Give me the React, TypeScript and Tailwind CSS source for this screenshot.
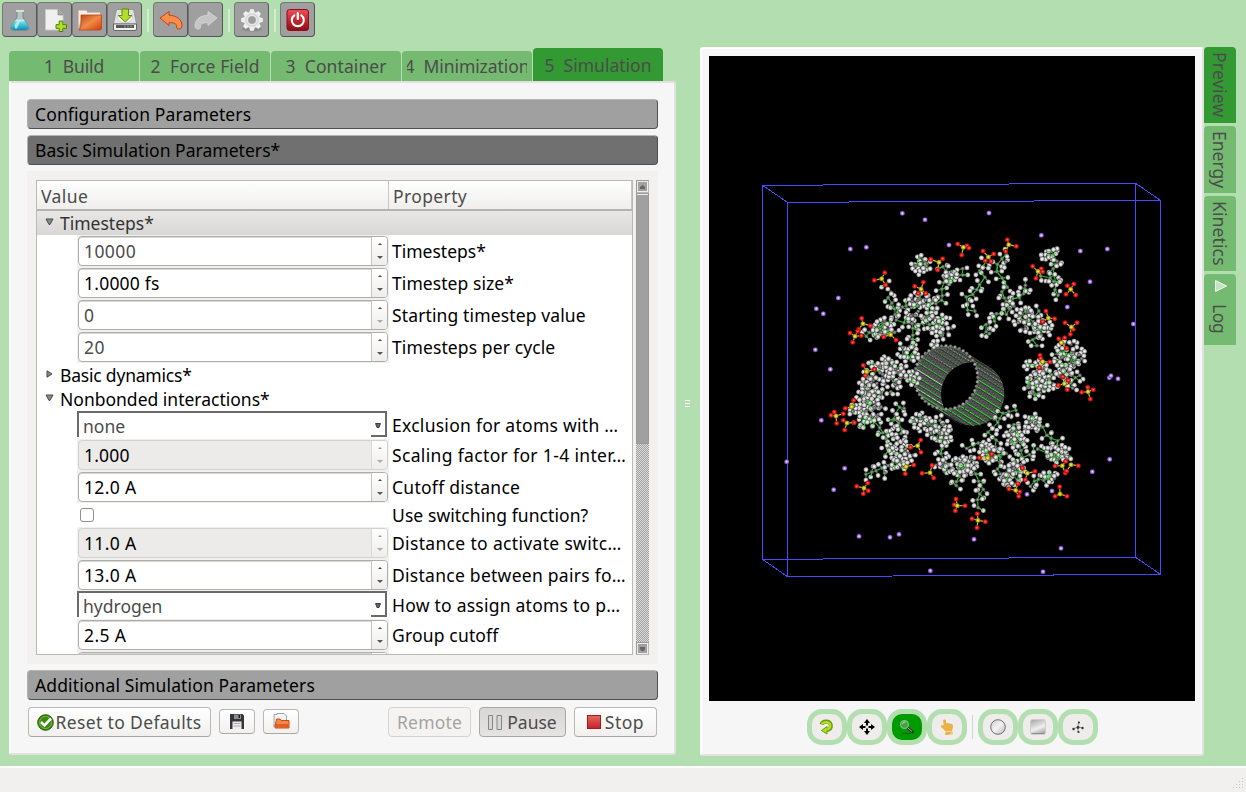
import { useLayoutEffect, useRef, useState } from "react";
import type { ReactNode } from "react";
import { FaHandPointUp } from "react-icons/fa";

/* ---------- text fitted to a fixed advance width ---------- */
function Fit({ text, w, className = "" }: { text: string; w: number; className?: string }) {
  const ref = useRef<HTMLSpanElement>(null);
  const [spacing, setSpacing] = useState(0);
  useLayoutEffect(() => {
    if (ref.current) {
      const natural = ref.current.offsetWidth;
      setSpacing((w - natural) / text.length);
    }
  }, [text, w]);
  return (
    <span ref={ref} className={`inline-block whitespace-pre ${className}`} style={{ letterSpacing: spacing }}>
      {text}
    </span>
  );
}

/* ---------- toolbar ---------- */
function ToolButton({ children }: { children: ReactNode }) {
  return (
    <div className="flex h-[35px] w-[35px] items-center justify-center rounded-[4px] border border-t-[#777] border-l-[#777] border-r-[#555] border-b-[#555] bg-[#9f9f9f]">
      {children}
    </div>
  );
}

const Sep = () => <div className="mx-[4px] mt-[7px] h-[23px] w-[2px] bg-[#d3ecd1]" />;

function Flask() {
  return (
    <svg width="24" height="24" viewBox="0 0 24 24">
      <defs>
        <linearGradient id="fl" x1="0" x2="0" y1="0" y2="1">
          <stop offset="0" stopColor="#7fe9f2" />
          <stop offset="1" stopColor="#088fb0" />
        </linearGradient>
      </defs>
      <path d="M9 2.500v7L3 18.500c-1.300 3 .5 4 3 4h11.500c2.500 0 4.300-1 3-4l-5.500-9v-7z" fill="#b7c3c5" stroke="#6f8185" strokeWidth=".8" />
      <path d="M7 12.500h9.500l4 6.500c.6 2-.5 3-2.500 3H6c-2.500 0-3.600-1-2.800-3z" fill="url(#fl)" />
      <path d="M6.500 17.500l3-4.500h2.500l-3 7.500h-2z" fill="#c9f8fb" opacity=".75" />
      <path d="M8 2h8v1.800H8z" fill="#dce2e3" />
      <ellipse cx="12" cy="12.600" rx="4.600" ry="1" fill="#b8f3f6" />
    </svg>
  );
}
function NewDoc() {
  return (
    <svg width="24" height="24" viewBox="0 0 24 24">
      <path d="M2.500 1.500h13l4.500 5V22h-17.500z" fill="#f0f0ee" stroke="#c9c9c7" />
      <path d="M15 1.500v5.500H20z" fill="#a9a9a7" stroke="#7d7d7b" strokeWidth=".6" />
      <path d="M16.200 13h3.600v3.700h3.700v3.600h-3.700v3.200h-3.600v-3.200h-3.200v-3.600h3.200z" fill="#b4dd2c" stroke="#4c8204" strokeWidth="1" />
    </svg>
  );
}
function Folder() {
  return (
    <svg width="26" height="24" viewBox="0 0 26 24">
      <defs>
        <linearGradient id="fo" x1="0" x2="1" y1="0" y2="1">
          <stop offset="0" stopColor="#b9420f" />
          <stop offset=".5" stopColor="#f08b4a" />
          <stop offset="1" stopColor="#cf3d05" />
        </linearGradient>
      </defs>
      <path d="M1.500 20V2.500h8l1 2h12.500V10H5z" fill="#f2efec" stroke="#e2b9a5" strokeWidth=".8" />
      <path d="M4 7h20.500V20q0 2-2 2H2L4 19z" fill="url(#fo)" stroke="#c43f0a" strokeWidth=".8" />
    </svg>
  );
}
function SaveDisk() {
  return (
    <svg width="26" height="26" viewBox="0 0 26 26">
      <path d="M4.500 2.500h17L24.500 17H1.500z" fill="#e3e3e1" stroke="#8b8b89" strokeWidth=".8" />
      <ellipse cx="13" cy="10" rx="7.500" ry="6" fill="#f8f8f8" stroke="#b9b9b7" strokeWidth=".6" />
      <path d="M1.500 17h23v5q0 1.500-1.500 1.500H3q-1.500 0-1.500-1.500z" fill="#f0f0f0" stroke="#4b4b4b" strokeWidth=".8" />
      <path d="M4 18h18V21H4z" fill="#585858" />
      <path d="M13 18.500v2M16 18.500v2M19 18.500v2" stroke="#bbb" strokeWidth=".8" />
      <path d="M10 2h6.500v6.500H20L13.200 15 6.300 8.500H10z" fill="#b5de2a" stroke="#5a8b07" />
    </svg>
  );
}
function Arrow({ redo = false }: { redo?: boolean }) {
  return (
    <svg width="24" height="24" viewBox="0 0 24 24" className={redo ? "-scale-x-100" : ""}>
      <path
        d="M1 10L10 3.500v3.700c7 .3 12.500 3.500 13 10 0 2.500-1 3.800-3 3.800-2.500 0-2.500-1-2.500-3 0-2.500-3.500-3.500-7.500-3.300V17.500z"
        fill={redo ? "#c6c6c6" : "#f58d4e"}
        stroke={redo ? "#d2d2d2" : "#c9420d"}
        strokeLinejoin="round"
      />
    </svg>
  );
}
function Gear() {
  const teeth = [0, 45, 90, 135, 180, 225, 270, 315];
  return (
    <svg width="24" height="24" viewBox="0 0 24 24">
      <ellipse cx="12" cy="21" rx="10" ry="2.500" fill="#8a8a8a" />
      {teeth.map((a) => (
        <path key={a} d="M9.300 5l.8-3.800h3.800l.8 3.800z" fill="#f0f0f0" transform={`rotate(${a} 12 12)`} />
      ))}
      <circle cx="12" cy="12" r="6" fill="none" stroke="#ececec" strokeWidth="4.500" />
      <circle cx="12" cy="12" r="6" fill="none" stroke="#d5d5d5" strokeWidth="1.500" />
      <circle cx="12" cy="12" r="3.800" fill="#9c9c9c" stroke="#bababa" strokeWidth=".6" />
    </svg>
  );
}
function Power() {
  return (
    <svg width="24" height="24" viewBox="0 0 24 24">
      <defs>
        <linearGradient id="pw" x1="0" x2="0" y1="0" y2="1">
          <stop offset="0" stopColor="#e8525a" />
          <stop offset=".5" stopColor="#c8272f" />
          <stop offset="1" stopColor="#8e0b18" />
        </linearGradient>
      </defs>
      <rect x="1" y="1.500" width="21.500" height="21" rx="2.500" fill="url(#pw)" stroke="#8c0e1a" />
      <path d="M8.300 7.300a6 6 0 1 0 7 0" fill="none" stroke="#fff" strokeWidth="2.100" strokeLinecap="round" />
      <path d="M11.800 5v6" stroke="#fff" strokeWidth="2.200" strokeLinecap="round" />
    </svg>
  );
}

/* ---------- tabs and section bars ---------- */
function Tab({ text, w }: { text: string; w: number }) {
  return (
    <div className="flex h-[30px] w-[130px] items-center justify-center overflow-hidden rounded-t-[4px] bg-[#74ba70]">
      <Fit text={text} w={w} />
    </div>
  );
}
function Section({ text, w, dark = false }: { text: string; w: number; dark?: boolean }) {
  return (
    <div
      className={`flex h-[30px] w-[631px] items-center rounded-[4px] border border-t-[#b5b5b5] border-l-[#b0b0b0] border-r-[#4f4f4f] border-b-[#4f4f4f] pl-[7px] text-black ${
        dark ? "bg-[#707070]" : "bg-[#a0a0a0]"
      }`}
    >
      <Fit text={text} w={w} />
    </div>
  );
}

/* ---------- property tree ---------- */
type Row = {
  kind: "spin" | "combo" | "check";
  value?: string;
  vw?: number;
  tone?: "typed" | "faint" | "off";
  noDown?: boolean;
  prop: string;
  pw: number;
};

const timestepRows: Row[] = [
  { kind: "spin", value: "10000", vw: 52, tone: "faint", prop: "Timesteps*", pw: 94 },
  { kind: "spin", value: "1.0000 fs", vw: 76, tone: "typed", prop: "Timestep size*", pw: 122 },
  { kind: "spin", value: "0", vw: 10, tone: "faint", noDown: true, prop: "Starting timestep value", pw: 194 },
  { kind: "spin", value: "20", vw: 21, tone: "faint", prop: "Timesteps per cycle", pw: 163 },
];
const nonbondedRows: Row[] = [
  { kind: "combo", value: "none", vw: 42, prop: "Exclusion for atoms with …", pw: 226 },
  { kind: "spin", value: "1.000", vw: 46, tone: "off", prop: "Scaling factor for 1-4 inter…", pw: 234 },
  { kind: "spin", value: "12.0 A", vw: 52, tone: "typed", prop: "Cutoff distance", pw: 128 },
  { kind: "check", prop: "Use switching function?", pw: 196 },
  { kind: "spin", value: "11.0 A", vw: 52, tone: "off", prop: "Distance to activate switc…", pw: 230 },
  { kind: "spin", value: "13.0 A", vw: 52, tone: "typed", prop: "Distance between pairs fo…", pw: 234 },
  { kind: "combo", value: "hydrogen", vw: 79, prop: "How to assign atoms to p…", pw: 228 },
  { kind: "spin", value: "2.5 A", vw: 42, tone: "typed", prop: "Group cutoff", pw: 107 },
];

function Spin({ row }: { row: Row }) {
  const off = row.tone === "off";
  return (
    <div className="flex h-[32px] w-[312px] items-center bg-[#f1f0ee] pl-px">
      <div
        className={`flex h-[30px] w-[310px] overflow-hidden rounded-[4px] border ${off ? "border-[#d3d1cf] bg-[#ecebe9]" : "border-[#b0aeab] bg-white shadow-[inset_0_1px_0_#d9d8d6]"}`}
      >
        <div className={`flex flex-1 items-center pl-[5px] ${row.tone === "faint" ? "text-[#4c4c4c]" : "text-black"}`}>
          {row.value && <Fit text={row.value} w={row.vw ?? 0} />}
        </div>
        <div className={`flex w-[16px] flex-col items-center justify-between border-l bg-gradient-to-b from-white to-[#eeedeb] py-[6px] ${off ? "border-[#dcdad8]" : "border-[#c6c4c1]"}`}>
          <svg width="4" height="2" viewBox="0 0 4 2"><path d="M0 2L2 0l2 2z" fill={off ? "#999" : "#444"} /></svg>
          <svg width="6" height="3" viewBox="0 0 6 3"><path d="M0 0h6L3 3z" fill={off || row.noDown ? "#aaa" : "#555"} /></svg>
        </div>
      </div>
    </div>
  );
}

function Combo({ row }: { row: Row }) {
  return (
    <div className="h-[28px] w-[312px]">
      <div className="flex h-[26px] w-[310px] items-center border-t-2 border-l-2 border-t-[#6a6a6a] border-l-[#6a6a6a] bg-white pl-[4px] text-[#4c4c4c]">
        <Fit text={row.value ?? ""} w={row.vw ?? 0} className="mt-px flex-none" />
        <div className="ml-auto flex h-[24px] w-[16px] items-center justify-center border-r-2 border-b-2 border-[#6a6a6a] pt-[3px]">
          <svg width="6" height="5" viewBox="0 0 6 5"><path d="M.5.5h5L4 4.500H2z" fill="#666" stroke="#333" strokeWidth=".9" /></svg>
        </div>
      </div>
    </div>
  );
}

function PropRow({ row }: { row: Row }) {
  return (
    <div className="flex items-center">
      <div className="w-[40px] flex-none" />
      {row.kind === "spin" && <Spin row={row} />}
      {row.kind === "combo" && <Combo row={row} />}
      {row.kind === "check" && (
        <div className="flex h-[24px] w-[312px] items-center pl-[3px]">
          <div className="h-[14px] w-[14px] rounded-[3px] border border-[#8f8d8b] bg-white" />
        </div>
      )}
      <Fit text={row.prop} w={row.pw} className="ml-[3px] flex-none text-black" />
    </div>
  );
}

function Branch({ text, w, open = false, shaded = false }: { text: string; w: number; open?: boolean; shaded?: boolean }) {
  return (
    <div className={`flex h-[24px] flex-none items-center pl-[8px] ${shaded ? "bg-gradient-to-b from-[#e8e7e5] to-[#d8d7d5] text-[#333]" : "text-black"}`}>
      <svg width="9" height="8" viewBox="0 0 9 8" className="mr-[6px] mb-[3px]">
        <path d={open ? "M1 1h7L5 6.500H4z" : "M2 .8L7 4 2 7.200z"} fill="#888" stroke="#4a4a4a" />
      </svg>
      <Fit text={text} w={w} />
    </div>
  );
}

function ScrollArrow({ up = false }: { up?: boolean }) {
  return (
    <div className="flex h-[13px] w-[13px] items-center justify-center border-2 border-t-[#999] border-l-[#999] border-r-[#b8b8b8] border-b-[#b8b8b8] bg-[#a0a0a0] outline -outline-offset-2 outline-[#eee]">
      <svg width="5" height="4" viewBox="0 0 5 4"><path d={up ? "M0 4V2l2.500-2L5 2v2z" : "M0 0h5v2L3.500 4h-2L0 2z"} fill="#666" /></svg>
    </div>
  );
}

function PropertyTree() {
  return (
    <div className="flex h-[493px] w-[631px] bg-[#f2f1ef] pt-[9px] pl-[9px]">
      <div className="flex h-[475px] w-[597px] flex-col overflow-hidden border border-[#bbb9b6] bg-white">
        <div className="flex h-[30px] flex-none border-b-2 border-[#b5b3b1] bg-gradient-to-b from-white to-[#efeeec] text-[#4c4c4c]">
          <div className="flex w-[352px] items-center border-r border-[#c9c7c5] pl-[4px] pt-[2px]"><Fit text="Value" w={47} /></div>
          <div className="flex flex-1 items-center border-r border-[#c9c7c5] pl-[4px] pt-[2px]"><Fit text="Property" w={74} /></div>
        </div>
        <Branch text="Timesteps*" w={94} open shaded />
        {timestepRows.map((r) => <PropRow key={r.prop} row={r} />)}
        <Branch text="Basic dynamics*" w={132} />
        <Branch text="Nonbonded interactions*" w={210} open />
        {nonbondedRows.map((r) => <PropRow key={r.prop} row={r} />)}
        <PropRow row={{ kind: "spin", tone: "typed", prop: " ", pw: 5 }} />
      </div>
      <div className="ml-[3px] flex h-[475px] w-[13px] flex-col bg-[#b9b9b9] bg-[repeating-conic-gradient(#a0a0a0_0_25%,#dcdcdc_0_50%)] bg-[length:2px_2px]">
        <ScrollArrow up />
        <div className="h-[251px] border border-t-2 border-t-[#eee] border-l-[#ddd] border-r-[#777] border-b-[#777] bg-[#a0a0a0] outline -outline-offset-1 outline-[#999]" />
        <div className="flex-1" />
        <ScrollArrow />
      </div>
    </div>
  );
}

/* ---------- bottom buttons ---------- */
function PushButton({ children, className = "" }: { children: ReactNode; className?: string }) {
  return (
    <div className={`flex items-center justify-center rounded-[4px] border ${className}`}>
      {children}
    </div>
  );
}
const plain = "border-[#bab8b5] border-b-[#a9a7a4] bg-gradient-to-b from-white to-[#f1f0ee] text-[#4c4c4c]";

/* ---------- molecular scene (three units per pixel) ---------- */
type P = [number, number];

const ions: P[] = [
  [457, 130], [525, 149], [717, 129], [301, 237], [349, 232], [597, 225], [265, 384], [199, 416], [220, 431], [196, 539], [241, 598],
  [874, 196], [991, 243], [1072, 237], [1020, 335], [952, 411], [1150, 462], [1078, 623], [1083, 617], [1104, 626],
  [214, 751], [110, 875], [284, 895], [251, 959], [1079, 868], [1027, 905], [906, 963], [831, 973], [327, 1099], [420, 1102],
  [447, 1093], [672, 1108], [933, 1135], [541, 1202], [879, 1205],
];

/* first point is the central atom, the rest are the oxygens bonded to it */
const headGroups: P[][] = [
  [[395, 326], [373, 331], [404, 308], [407, 345]],
  [[513, 357], [494, 349], [520, 337], [527, 370], [505, 370]],
  [[339, 461], [335, 445], [361, 467], [326, 478]],
  [[315, 499], [300, 489], [308, 517], [334, 497], [323, 484]],
  [[422, 494], [401, 501], [438, 510]],
  [[567, 277], [542, 268], [578, 266], [563, 300]],
  [[640, 232], [623, 222], [651, 227], [657, 234], [635, 255]],
  [[715, 261], [699, 243], [731, 252], [706, 272], [723, 274]],
  [[350, 605], [340, 586], [373, 598], [346, 616]],
  [[776, 224], [772, 209], [799, 229], [767, 244]],
  [[864, 304], [848, 289], [874, 296], [878, 305], [858, 325]],
  [[962, 358], [952, 347], [971, 342], [977, 375], [948, 373]],
  [[895, 444], [888, 423], [914, 446], [878, 455]],
  [[964, 471], [945, 458], [981, 458], [961, 493], [970, 478]],
  [[934, 518], [926, 506], [944, 503], [950, 535]],
  [[878, 575], [900, 576], [868, 593], [870, 556], [872, 565]],
  [[943, 641], [925, 646], [938, 620], [952, 659], [955, 631]],
  [[1014, 665], [995, 667], [1013, 652], [1030, 659], [1021, 687]],
  [[258, 738], [243, 736], [253, 726], [280, 731], [260, 760]],
  [[291, 759], [280, 751], [313, 758], [284, 780]],
  [[305, 710], [311, 691], [286, 715]],
  [[503, 827], [512, 810], [481, 832], [513, 847]],
  [[342, 954], [320, 949], [353, 939], [355, 962], [340, 971]],
  [[468, 890], [491, 885], [466, 911]],
  [[540, 908], [546, 886], [516, 910], [551, 924]],
  [[622, 1007], [618, 987], [613, 1004], [645, 1007], [616, 1022]],
  [[684, 1051], [682, 1031], [666, 1046], [706, 1055], [681, 1073]],
  [[713, 864], [725, 852], [688, 863]],
  [[832, 910], [817, 894], [855, 904], [826, 929]],
  [[797, 961], [777, 957], [804, 941], [809, 965], [806, 979]],
  [[937, 887], [915, 888], [947, 874], [946, 909]],
  [[963, 884], [985, 887], [950, 903]],
  [[930, 972], [929, 950], [915, 979], [951, 979]],
];

const chains: P[][] = [
  [[407, 345], [420, 370], [412, 385], [437, 415], [440, 450]],
  [[440, 425], [470, 405], [510, 385], [545, 400]],
  [[500, 460], [560, 465], [600, 480]],
  [[575, 290], [598, 320], [640, 315], [629, 275]],
  [[598, 325], [572, 358], [575, 392], [540, 410]],
  [[706, 275], [688, 302], [702, 325], [682, 355], [652, 385], [655, 422], [692, 425]],
  [[345, 497], [375, 485], [400, 465], [445, 492]],
  [[440, 450], [485, 462], [487, 492], [475, 545]],
  [[765, 255], [742, 280], [738, 308], [755, 328], [772, 350], [755, 368], [770, 395], [800, 408]],
  [[790, 405], [770, 432], [738, 428], [735, 455], [705, 465], [705, 485], [735, 492]],
  [[765, 275], [780, 278]],
  [[790, 385], [822, 375], [828, 345], [852, 340]],
  [[905, 245], [918, 270], [912, 298], [915, 360], [935, 390]],
  [[875, 320], [900, 322], [918, 350]],
  [[865, 425], [850, 450]],
  [[880, 480], [850, 510], [870, 545]],
  [[850, 670], [850, 698]],
  [[990, 615], [965, 635], [970, 668]],
  [[340, 755], [370, 755], [400, 785], [425, 805]],
  [[430, 750], [445, 715], [475, 708]],
  [[430, 750], [455, 775], [455, 805]],
  [[345, 915], [380, 900], [412, 888], [440, 870]],
  [[400, 912], [415, 905]],
  [[575, 800], [575, 850], [582, 890]],
  [[640, 890], [622, 935], [610, 965]],
  [[665, 895], [685, 930], [700, 955], [685, 985], [682, 1012], [668, 1018]],
  [[650, 835], [682, 820], [710, 850], [750, 860], [790, 840]],
  [[795, 718], [760, 730], [740, 760], [715, 785], [740, 810], [730, 845]],
  [[790, 765], [800, 815], [820, 860], [865, 835]],
  [[845, 755], [880, 770], [890, 795], [925, 815], [920, 845]],
  [[865, 835], [890, 845], [920, 855], [955, 850]],
  [[750, 860], [745, 900], [765, 930], [790, 940]],
  [[840, 950], [850, 930], [880, 930], [900, 912], [930, 930]],
];

/* x, y, radius, atom count */
const clumps: [number, number, number, number][] = [
  [513, 285, 27, 18], [598, 320, 22, 9], [512, 415, 48, 36], [572, 468, 38, 25], [400, 472, 30, 17], [475, 545, 32, 16], [555, 520, 14, 5],
  [402, 625, 60, 60], [440, 585, 32, 14], [485, 625, 24, 12], [890, 255, 17, 6], [912, 255, 20, 7], [830, 452, 36, 24], [880, 478, 28, 15],
  [855, 600, 34, 20], [862, 645, 38, 28], [955, 555, 48, 36], [945, 595, 42, 20], [908, 620, 34, 16], [350, 690, 40, 24], [368, 715, 36, 22],
  [312, 715, 20, 8], [335, 760, 22, 8], [350, 650, 24, 12], [435, 812, 36, 20], [460, 850, 34, 20], [448, 880, 24, 9], [412, 840, 20, 7],
  [510, 757, 27, 17], [560, 775, 38, 26], [580, 802, 28, 14], [582, 890, 26, 13], [632, 890, 30, 20], [665, 882, 22, 10],
  [710, 850, 28, 18], [800, 800, 34, 24], [845, 755, 24, 15], [800, 890, 28, 13], [780, 930, 26, 11], [920, 853, 30, 17], [950, 850, 20, 8],
  [790, 910, 28, 10], [895, 920, 18, 7], [755, 925, 16, 4],
];

function makeRandom(seed: number) {
  let s = seed;
  return () => {
    s = (s * 1664525 + 1013904223) % 4294967296;
    return s / 4294967296;
  };
}

type Atom = { p: P; h: boolean };

function buildLipids() {
  const rnd = makeRandom(11);
  const bonds: [P, P][] = [];
  const atoms: Atom[] = [];
  chains.forEach((c) => {
    let prev: P | null = null;
    for (let i = 0; i < c.length - 1; i++) {
      const [x0, y0] = c[i];
      const [x1, y1] = c[i + 1];
      const len = Math.hypot(x1 - x0, y1 - y0);
      const n = Math.max(1, Math.round(len / 19));
      for (let k = 0; k < n; k++) {
        const p: P = [x0 + ((x1 - x0) * k) / n + (rnd() - 0.5) * 8, y0 + ((y1 - y0) * k) / n + (rnd() - 0.5) * 8];
        atoms.push({ p, h: false });
        if (prev) bonds.push([prev, p]);
        const a = Math.atan2(y1 - y0, x1 - x0) + Math.PI / 2 + (rnd() - 0.5) * 1.4;
        [1, -1].forEach((d) => {
          const reach = 13 + rnd() * 5;
          const h: P = [p[0] + Math.cos(a) * reach * d, p[1] + Math.sin(a) * reach * d];
          atoms.push({ p: h, h: true });
          bonds.push([p, h]);
        });
        prev = p;
      }
    }
  });
  clumps.forEach(([cx, cy, r, count]) => {
    const own: P[] = [];
    let tries = 0;
    while (own.length < count && tries++ < 700) {
      const a = rnd() * Math.PI * 2;
      const d = Math.pow(rnd(), 0.6) * r * 1.1;
      const p: P = [cx + Math.cos(a) * d, cy + Math.sin(a) * d];
      if (own.every((q) => Math.hypot(q[0] - p[0], q[1] - p[1]) > 9)) own.push(p);
    }
    let last: P | null = null;
    own.forEach((p, i) => {
      if (i % 5 < 3) {
        const c: P = [p[0] * 0.75 + cx * 0.25 + (rnd() - 0.5) * 12, p[1] * 0.75 + cy * 0.25 + (rnd() - 0.5) * 12];
        atoms.push({ p: c, h: false });
        bonds.push([p, c]);
        if (last && Math.hypot(last[0] - c[0], last[1] - c[1]) < 36) bonds.push([last, c]);
        last = c;
      }
      atoms.push({ p, h: true });
    });
  });
  return { bonds, atoms };
}
const lipids = buildLipids();

const near: P = [588, 622];
const far: P = [668, 672];
const tubeR = 95;
const onRing = (c: P, deg: number): P => [c[0] + tubeR * Math.cos((deg * Math.PI) / 180), c[1] + tubeR * Math.sin((deg * Math.PI) / 180)];

function Tube() {
  const angles = Array.from({ length: 30 }, (_, i) => i * 12 + 4);
  const ring = Array.from({ length: 44 }, (_, i) => onRing(near, (i * 360) / 44));
  return (
    <g>
      <defs>
        <pattern id="mesh" width="9" height="6" patternUnits="userSpaceOnUse" patternTransform="rotate(32)">
          <rect width="9" height="6" fill="#343434" />
          <circle cx="2.500" cy="2" r="2.300" fill="#747474" />
          <circle cx="7" cy="5" r="2" fill="#666" />
        </pattern>
        <clipPath id="nearEnd"><circle cx={near[0]} cy={near[1]} r={tubeR} /></clipPath>
      </defs>
      <line x1={near[0]} y1={near[1]} x2={far[0]} y2={far[1]} stroke="url(#mesh)" strokeWidth={tubeR * 2} />
      <circle cx={near[0]} cy={near[1]} r={tubeR} fill="url(#mesh)" />
      <circle cx={far[0]} cy={far[1]} r={tubeR} fill="url(#mesh)" />
      {angles.map((deg, i) => {
        const a = onRing(near, deg);
        const b = onRing(far, deg);
        const inner = deg > 130 && deg < 290;
        const bright = deg > -1 && deg < 95;
        return (
          <g key={deg}>
            <line x1={a[0] + 5} y1={a[1] + 7} x2={b[0] + 5} y2={b[1] + 7} stroke="#262626" strokeWidth="2" />
            {(inner || bright || deg > 325) && (
              <line
                x1={a[0]}
                y1={a[1]}
                x2={b[0]}
                y2={b[1]}
                stroke={bright ? "#20e820" : i % 3 === 1 ? "#9df59d" : "#35c835"}
                strokeWidth="3"
                strokeDasharray={deg > 225 ? "5 5" : i % 2 ? "15 3" : undefined}
                opacity={deg > 225 ? 0.6 : 1}
              />
            )}
          </g>
        );
      })}
      <circle cx={far[0]} cy={far[1]} r={tubeR} fill="#000" clipPath="url(#nearEnd)" />
      {ring.map(([x, y], i) => <circle key={i} cx={x} cy={y} r="4.600" fill={i % 2 ? "#a8a8a8" : "#828282"} stroke="#444" strokeWidth="1" />)}
    </g>
  );
}

function Scene() {
  return (
    <svg width="486" height="645" viewBox="-123 -342 1458 1935" className="block bg-black">
      <defs>
        <radialGradient id="gH"><stop offset="0" stopColor="#fff" /><stop offset=".4" stopColor="#dcdcdc" /><stop offset=".75" stopColor="#a2a2a2" /><stop offset="1" stopColor="#3c3c3c" /></radialGradient>
        <radialGradient id="gO"><stop offset="0" stopColor="#ff7a70" /><stop offset=".5" stopColor="#f01c1c" /><stop offset="1" stopColor="#8c0808" /></radialGradient>
        <radialGradient id="gS"><stop offset="0" stopColor="#fff27a" /><stop offset=".5" stopColor="#d4c41c" /><stop offset="1" stopColor="#6a6005" /></radialGradient>
        <radialGradient id="gI"><stop offset="0" stopColor="#fff" /><stop offset=".45" stopColor="#b98af0" /><stop offset="1" stopColor="#5f3699" /></radialGradient>
        <radialGradient id="gC"><stop offset="0" stopColor="#aaa" /><stop offset="1" stopColor="#3c3c3c" /></radialGradient>
      </defs>
      <g stroke="#4848ff" strokeWidth="3" fill="none" shapeRendering="crispEdges">
        <path d="M37.500 46L1156.500 40V1162L37.500 1168z" />
        <path d="M112.500 97L1231.500 91V1213L112.500 1220z" />
        <path d="M37.500 46l75 51M1156.500 40l75 51M37.500 1168l75 52M1156.500 1162l75 51" />
      </g>
      <Tube />
      <g stroke="#1fd81f" strokeWidth="3.200">
        {lipids.bonds.map(([a, b], i) => <line key={i} x1={a[0]} y1={a[1]} x2={b[0]} y2={b[1]} />)}
      </g>
      {lipids.atoms.map(({ p, h }, i) => <circle key={i} cx={p[0]} cy={p[1]} r={h ? 7.8 : 6} fill={h ? "url(#gH)" : "url(#gC)"} />)}
      <g stroke="#1fd81f" strokeWidth="2.600">
        {lipids.bonds.filter((_, i) => i % 6 === 0).map(([a, b], i) => <line key={i} x1={a[0]} y1={a[1]} x2={b[0]} y2={b[1]} />)}
      </g>
      {headGroups.map((g, i) => (
        <g key={i}>
          {g.slice(1).map(([x, y], k) => <line key={k} x1={g[0][0]} y1={g[0][1]} x2={x} y2={y} stroke="#c8c81c" strokeWidth="3.500" />)}
          {g.slice(1).map(([x, y], k) => <circle key={k} cx={x} cy={y} r="7.500" fill="url(#gO)" />)}
          <circle cx={g[0][0]} cy={g[0][1]} r="7.500" fill="url(#gS)" />
        </g>
      ))}
      {ions.map(([x, y], i) => <circle key={i} cx={x} cy={y} r="7.500" fill="url(#gI)" />)}
    </svg>
  );
}

/* ---------- right side ---------- */
function RoundTool({ children, active = false }: { children: ReactNode; active?: boolean }) {
  return (
    <div className={`flex h-[36px] w-[40px] items-center justify-center rounded-[15px] border-[5px] border-[#b3dfb0] ${active ? "bg-[#009b00]" : "bg-[#eeedeb]"}`}>
      {children}
    </div>
  );
}

function ViewTools() {
  return (
    <div className="flex pl-[98px] pt-[8px]">
      <RoundTool>
        <svg width="16" height="16" viewBox="0 0 16 16">
          <path d="M2.500 5.500C3.500 2 10.500 1 11.800 6c.5 3-1.500 4.800-4.300 5" fill="none" stroke="#6a9c08" strokeWidth="4" />
          <path d="M8 7.500v7.500L2.500 11.500z" fill="#b5dc28" stroke="#6a9c08" />
          <path d="M3 5.200C4 2.800 10 1.800 11.300 6c.4 2.600-1.300 4.200-4.300 4.700" fill="none" stroke="#b5dc28" strokeWidth="2.200" />
        </svg>
      </RoundTool>
      <RoundTool>
        <svg width="16" height="16" viewBox="0 0 16 16">
          <path d="M8 0l3 4H9v2.500H7V4H5zM8 16l3-4H9V9.500H7V12H5zM0 8l4-3v2h2.500v2H4v2zM16 8l-4-3v2H9.500v2H12v2z" fill="#000" />
        </svg>
      </RoundTool>
      <RoundTool active>
        <svg width="16" height="16" viewBox="0 0 16 16">
          <path d="M9 9l4.500 4" stroke="#333" strokeWidth="3" strokeLinecap="round" />
          <path d="M9 9l4 3.600" stroke="#aaa" strokeWidth="1" />
          <circle cx="5.500" cy="5.500" r="3.900" fill="#3fa53f" stroke="#86b886" strokeWidth="1.300" />
          <path d="M3.500 5a2.500 2.500 0 0 1 3-2" stroke="#b5e0b5" fill="none" />
          <path d="M3 14.500h9" stroke="#067006" strokeWidth="1.500" />
        </svg>
      </RoundTool>
      <RoundTool><FaHandPointUp size={16} color="#edb043" className="-rotate-6" /></RoundTool>
      <div className="mr-[4px] ml-[5px] mt-[6px] h-[24px] w-px bg-[#d4d3d1]" />
      <div className="w-px" />
      <RoundTool>
        <svg width="16" height="16" viewBox="0 0 16 16">
          <defs><linearGradient id="ball" x2="1" y2="1"><stop offset="0" stopColor="#cfcfcf" /><stop offset=".5" stopColor="#f2f2f2" /><stop offset="1" stopColor="#bbb" /></linearGradient></defs>
          <circle cx="8" cy="8" r="7.300" fill="url(#ball)" stroke="#6e6e6e" />
        </svg>
      </RoundTool>
      <RoundTool>
        <svg width="16" height="16" viewBox="0 0 16 16">
          <defs><linearGradient id="cube" x1=".2" x2=".6" y2="1"><stop offset="0" stopColor="#a8a8a8" /><stop offset=".6" stopColor="#efefef" /><stop offset="1" stopColor="#aaa" /></linearGradient></defs>
          <rect x=".5" y=".5" width="15" height="15" rx="2" fill="url(#cube)" stroke="#cfcfcf" />
          <path d="M1.500 14.500h13" stroke="#8d8d8d" />
        </svg>
      </RoundTool>
      <RoundTool>
        <svg width="12" height="14" viewBox="0 0 12 14" fill="#333">
          <path d="M1 9l5-2 5 1M6.500 1.500L6 7v5" stroke="#777" strokeWidth=".8" fill="none" />
          <circle cx="1.500" cy="9" r="1.200" /><circle cx="6" cy="7.500" r="1.400" /><circle cx="10.500" cy="8" r="1.200" /><circle cx="7" cy="2.500" r="1" /><circle cx="6.500" cy="12" r="1.100" />
        </svg>
      </RoundTool>
    </div>
  );
}

function VFit({ text, h }: { text: string; h: number }) {
  const ref = useRef<HTMLSpanElement>(null);
  const [spacing, setSpacing] = useState(0);
  useLayoutEffect(() => {
    if (ref.current) setSpacing((h - ref.current.offsetHeight) / text.length);
  }, [text, h]);
  return <span ref={ref} className="inline-block leading-[22px] whitespace-pre" style={{ letterSpacing: spacing }}>{text}</span>;
}
function SideTab({ text, h, className = "", arrow = false }: { text: string; h: number; className?: string; arrow?: boolean }) {
  return (
    <div className={`flex w-[32px] flex-col items-center justify-center rounded-t-[4px] ${className}`}>
      {arrow && (
        <svg width="12" height="12" viewBox="0 0 12 12" className="mb-[12px] ml-[2px]"><path d="M.5.500v11L11.500 6z" fill="#c5e2c3" stroke="#f2faf1" /></svg>
      )}
      <div className="[writing-mode:vertical-rl]"><VFit text={text} h={h} /></div>
    </div>
  );
}

export default function App() {
  return (
    <div className="flex h-[792px] w-[1246px] flex-col overflow-hidden bg-[#b3dfb0] font-['Noto_Sans','Open_Sans',sans-serif] text-[17.5px] leading-[24px] text-[#4c4c4c]">
      <div className="flex h-[47px] flex-none pt-[2px] pl-[2px]">
        <ToolButton><Flask /></ToolButton>
        <ToolButton><NewDoc /></ToolButton>
        <ToolButton><Folder /></ToolButton>
        <ToolButton><SaveDisk /></ToolButton>
        <div className="w-px" />
        <Sep />
        <ToolButton><Arrow /></ToolButton>
        <ToolButton><Arrow redo /></ToolButton>
        <div className="w-px" />
        <Sep />
        <ToolButton><Gear /></ToolButton>
        <div className="w-px" />
        <Sep />
        <ToolButton><Power /></ToolButton>
      </div>

      <div className="flex h-[719px] flex-none">
        <div className="ml-[9px] flex w-[667px] flex-none flex-col">
          <div className="flex h-[34px] flex-none items-end gap-px">
            <Tab text="1  Build" w={60} />
            <Tab text="2  Force Field" w={109} />
            <Tab text="3  Container" w={101} />
            <div className="flex h-[30px] w-[130px] items-center justify-center rounded-t-[4px] bg-[#74ba70]">
              <div className="flex w-[120px] justify-center overflow-hidden"><Fit text="4  Minimization" w={125} className="flex-none" /></div>
            </div>
            <div className="flex h-[33px] w-[130px] items-center justify-center rounded-t-[4px] bg-[#339933]"><Fit text="5  Simulation" w={107} /></div>
          </div>
          <div className="flex h-[674px] flex-none flex-col rounded-[3px] rounded-tl-none border-2 border-[#e3e1df] border-t-[#e3e1df] border-l-white bg-[#f6f6f6] pl-[16px] pt-[16px]">
            <Section text="Configuration Parameters" w={216} />
            <div className="h-[6px]" />
            <Section text="Basic Simulation Parameters*" w={245} dark />
            <div className="h-[6px]" />
            <PropertyTree />
            <div className="h-[6px]" />
            <Section text="Additional Simulation Parameters" w={280} />
            <div className="mt-[7px] flex h-[30px] w-[630px] items-center">
              <PushButton className={`ml-px h-[30px] w-[183px] gap-[2px] pr-px ${plain}`}>
                <svg width="17" height="17" viewBox="0 0 17 17">
                  <circle cx="8.500" cy="8.500" r="7.800" fill="#3a8a0c" stroke="#2b5d0b" />
                  <circle cx="8.500" cy="8.500" r="6" fill="none" stroke="#8ac45e" strokeWidth=".8" />
                  <path d="M4 8l3.500 3.500L14 4.500" fill="none" stroke="#fff" strokeWidth="2.600" />
                </svg>
                <Fit text="Reset to Defaults" w={146} />
              </PushButton>
              <PushButton className={`mb-[2px] ml-[8px] h-[25px] w-[36px] ${plain}`}>
                <svg width="14" height="15" viewBox="0 0 14 15">
                  <path d="M0 0h12.500L14 1.500V15H0z" fill="#35363a" />
                  <path d="M4 .5h7V5H4z" fill="#8b8c90" /><path d="M8.500 1h1.500v3H8.500z" fill="#222" />
                  <path d="M2.500 7.500h9V15h-9z" fill="#eee" /><path d="M3.500 9.500h7M3.500 12h7" stroke="#999" strokeWidth=".8" />
                </svg>
              </PushButton>
              <PushButton className={`mb-[2px] ml-[8px] h-[25px] w-[36px] ${plain}`}>
                <svg width="17" height="16" viewBox="0 0 17 16">
                  <path d="M1 14V1.500h3V.5h7l2.500 2.500V8H3.500z" fill="#f4f4f2" stroke="#999" strokeWidth=".9" />
                  <path d="M3.500 6h3.500l1 1.500h8V15H2z" fill="#ee8a50" stroke="#d2470c" />
                  <path d="M3 11h12.500v3.500H2.500z" fill="#e65e1e" />
                </svg>
              </PushButton>
              <PushButton className="ml-auto h-[30px] w-[83px] border-[#d6d4d1] bg-[#f4f3f1] text-[#a5a4a2]"><Fit text="Remote" w={65} /></PushButton>
              <PushButton className="ml-[8px] h-[30px] w-[87px] gap-[5px] border-[#a9a7a4] bg-gradient-to-b from-[#d9d7d5] to-[#e6e4e2]">
                <svg width="14" height="15" viewBox="0 0 14 15"><path d="M.5.500h4v14h-4zM9 .5h4.500v14H9z" fill="#d6d8d3" stroke="#858783" /></svg>
                <Fit text="Pause" w={49} />
              </PushButton>
              <PushButton className={`ml-[8px] h-[30px] w-[83px] gap-[4px] ${plain}`}>
                <svg width="14" height="14" viewBox="0 0 14 14">
                  <defs><linearGradient id="st" x2="0" y2="1"><stop offset="0" stopColor="#e56a5a" /><stop offset="1" stopColor="#c5202c" /></linearGradient></defs>
                  <rect x=".5" y=".5" width="13" height="13" fill="url(#st)" stroke="#a81820" />
                </svg>
                <Fit text="Stop" w={39} />
              </PushButton>
            </div>
          </div>
        </div>

        <div className="flex w-[24px] flex-none flex-col items-center gap-[2px] pt-[353px] pr-px">
          <div className="h-px w-[5px] bg-white" />
          <div className="h-px w-[5px] bg-white" />
          <div className="h-px w-[5px] bg-white" />
        </div>

        <div className="h-[709px] w-[504px] flex-none rounded-[3px] border-2 border-[#e3e1df] border-l-white border-t-white bg-[#f6f6f6] pl-[7px] pt-[7px]">
          <Scene />
          <ViewTools />
        </div>

        <div className="flex w-[32px] flex-none flex-col gap-[3px]">
          <SideTab text="Preview" h={66} className="h-[76px] bg-[#339933]" />
          <SideTab text="Energy" h={57} className="h-[67px] bg-[#74ba70]" />
          <SideTab text="Kinetics" h={65} className="h-[75px] bg-[#74ba70]" />
          <SideTab text="Log" h={30} className="h-[71px] bg-[#74ba70] pb-[6px]" arrow />
        </div>
      </div>

      <div className="flex flex-1 items-end justify-end border-t-2 border-t-white bg-[#f1f0ee] pr-[2px] pb-[3px]">
        <svg width="11" height="11" viewBox="0 0 11 11" fill="#c9c7c5">
          <path d="M9 0h1v1H9zM6 3h1v1H6zM9 3h1v1H9zM3 6h1v1H3zM6 6h1v1H6zM9 6h1v1H9zM0 9h1v1H0zM3 9h1v1H3zM6 9h1v1H6zM9 9h1v1H9z" />
        </svg>
      </div>
    </div>
  );
}
